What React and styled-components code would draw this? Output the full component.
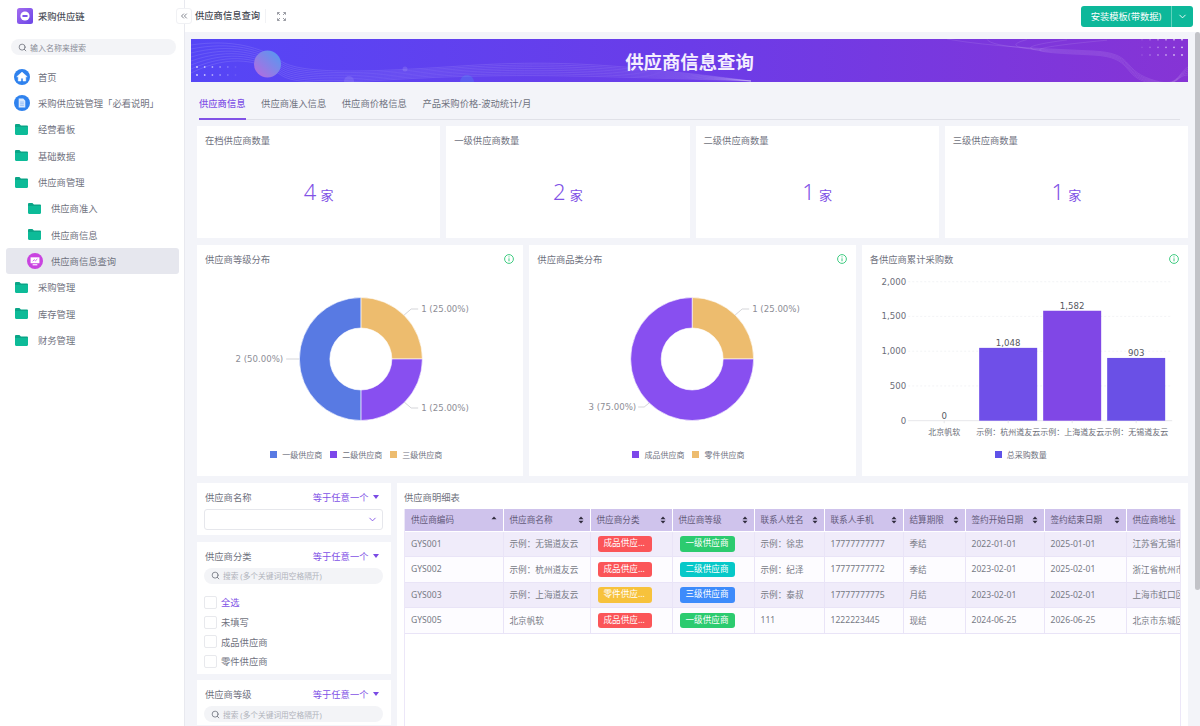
import React from 'react';
import styled, { createGlobalStyle } from 'styled-components';
import { Search, ChevronDown, ChevronsLeft } from 'lucide-react';

const cjk = '"Noto Sans", "Noto Sans CJK SC", sans-serif';
const purple = '#8152e6';
const textColor = '#6f7280';

const GlobalStyle = createGlobalStyle`
    html, body, #root {
        margin: 0;
        height: 100%;
    }
    body {
        font-family: ${cjk};
        font-size: 9.3px;
        color: ${textColor};
        overflow: hidden;
        background: #f3f4f9;
    }
    * { box-sizing: border-box; }
`;

const Shell = styled.div`
    display: grid;
    grid-template-columns: 185px 1fr;
    height: 100vh;
`;

const Sidebar = styled.aside`
    background: #fff;
    border-right: 1px solid #e8e9ef;
    display: flex;
    flex-direction: column;
`;

const Brand = styled.div`
    display: flex;
    align-items: center;
    gap: 5px;
    height: 32px;
    padding-left: 17px;
    font-size: 9.3px;
    font-weight: 500;
    color: #4c4f5a;
`;

const SearchBox = styled.div`
    display: flex;
    align-items: center;
    gap: 3px;
    height: 16px;
    margin: ${p => p.$inCard ? '0' : '7px 8px 0 11px'};
    padding-left: 7px;
    border-radius: 8px;
    background: #f3f4f7;
    color: ${p => p.$inCard ? '#b0b3bb' : '#8a8d97'};
    font-size: ${p => p.$inCard ? '7.7px' : '8px'};
    svg { color: #666a74; flex: none; }
`;

const Menu = styled.nav`
    display: flex;
    flex-direction: column;
    margin-top: 8.5px;
    padding: 0 5.5px;
`;

const MenuItem = styled.div`
    display: flex;
    align-items: center;
    height: 26.35px;
    padding-left: ${p => p.$child ? '20px' : '7px'};
    border-radius: 3px;
    background: ${p => p.$active ? '#e6e7ee' : 'transparent'};
`;

const MenuIcon = styled.span`
    display: flex;
    justify-content: center;
    width: 18px;
    margin-right: 7.5px;
    flex: none;
`;

const Main = styled.main`
    position: relative;
    display: flex;
    flex-direction: column;
    min-width: 0;
    height: 100vh;
`;

const TopBar = styled.header`
    display: flex;
    align-items: center;
    height: 32px;
    flex: none;
    padding: 0 7px 0 10px;
    background: #fff;
`;

const PageTitle = styled.div`
    font-weight: 500;
    color: #454852;
    padding-right: 5px;
    border-right: 1px solid #f1f2f5;
    line-height: 14px;
`;

const ExpandBtn = styled.span`
    display: flex;
    margin-left: 11px;
    color: #7d808a;
`;

const CollapseBtn = styled.button`
    position: absolute;
    top: 8px;
    left: -9px;
    width: 16px;
    height: 16px;
    padding: 0;
    display: flex;
    align-items: center;
    justify-content: center;
    background: #fff;
    border: 1px solid #f0f1f4;
    border-radius: 3px;
    color: #6a6d78;
`;

const InstallGroup = styled.div`
    display: flex;
    margin-left: auto;
    height: 21px;
    border-radius: 3px;
    overflow: hidden;
    background: #0db89a;
    color: #fff;
`;

const InstallBtn = styled.div`
    display: flex;
    align-items: center;
    justify-content: center;
    width: 91px;
    border-right: 1px solid #5fd3bd;
`;

const InstallArrow = styled.div`
    display: flex;
    align-items: center;
    justify-content: center;
    width: 21px;
`;

const Scroller = styled.div`
    flex: 1;
    min-height: 0;
    overflow: hidden;
    padding: 7px 12px 7px 6px;
`;

const ScrollThumb = styled.div`
    position: absolute;
    top: 32px;
    right: 0;
    width: 5px;
    height: 558px;
    border-radius: 3px;
    background: #c2c3c8;
`;

const Banner = styled.div`
    position: relative;
    height: 43px;
    display: flex;
    align-items: center;
    justify-content: center;
    background: linear-gradient(90deg, #5546f6 0%, #6b3ce8 50%, #8634d5 100%);
    color: #f4eefe;
    font-size: 18.4px;
    font-weight: 700;
    overflow: hidden;
    svg {
        position: absolute;
        inset: 0;
        width: 100%;
        height: 100%;
    }
    span { position: relative; }
`;

const Panel = styled.section`
    margin-top: 6px;
    padding-left: 6px;
`;

const Tabs = styled.div`
    display: flex;
    gap: 15.6px;
    height: 32px;
    margin: 0 8px 6px 2px;
    border-bottom: 1px solid #e0e1e8;
`;

const Tab = styled.div`
    display: flex;
    align-items: center;
    height: 32px;
    color: ${p => p.$active ? purple : textColor};
    font-weight: ${p => p.$active ? 500 : 400};
    border-bottom: 2px solid ${p => p.$active ? purple : 'transparent'};
`;

const StatGrid = styled.div`
    display: grid;
    grid-template-columns: repeat(4, minmax(0, 1fr));
    gap: 6px;
`;

const Card = styled.div`
    background: #fff;
    min-width: 0;
`;

const StatCard = styled(Card)`
    height: 112px;
    padding: 7px 8px;
    display: flex;
    flex-direction: column;
`;

const StatValue = styled.div`
    flex: 1;
    display: flex;
    align-items: baseline;
    justify-content: center;
    gap: 4px;
    padding-top: 29px;
    color: ${purple};
    font-size: 13px;
    b {
        font-size: 22px;
        font-weight: 300;
    }
`;

const ChartGrid = styled.div`
    display: grid;
    grid-template-columns: repeat(3, minmax(0, 1fr));
    gap: 6px;
    margin-top: 7px;
`;

const ChartCard = styled(Card)`
    height: 231px;
    padding-top: 7px;
    display: flex;
    flex-direction: column;
    svg.plot {
        display: block;
        width: 100%;
        height: 176px;
        margin-top: 4px;
    }
    svg.plot text {
        font-family: "DejaVu Sans", sans-serif;
        font-size: 8.6px;
    }
    svg.plot text.cat {
        font-family: ${cjk};
        font-size: 8px;
    }
`;

const ChartHead = styled.div`
    display: flex;
    align-items: center;
    justify-content: space-between;
    height: 14px;
    padding: 0 9px 0 8px;
`;

const Legend = styled.div`
    display: flex;
    justify-content: center;
    align-items: center;
    gap: 8px;
    height: 12px;
    margin-top: 2px;
    padding-right: 8px;
    font-size: 8px;
`;

const LegendItem = styled.span`
    display: flex;
    align-items: center;
    gap: 5px;
    &::before {
        content: "";
        width: 7px;
        height: 7px;
        background: ${p => p.$color};
    }
`;

const BottomRow = styled.div`
    display: grid;
    grid-template-columns: 194px minmax(0, 1fr);
    gap: 6px;
    margin-top: 7px;
    min-height: 405px;
`;

const FilterColumn = styled.div`
    display: flex;
    flex-direction: column;
    gap: 6.5px;
`;

const FilterCard = styled(Card)`
    padding: 7px 8px ${p => p.$list ? '2.5px' : '5px'} 7px;
`;

const FilterHead = styled.div`
    display: flex;
    justify-content: space-between;
    align-items: center;
    height: 14px;
    margin-bottom: 5px;
    padding-left: 1px;
`;

const MatchMode = styled.span`
    display: flex;
    align-items: center;
    gap: 4.5px;
    padding-right: 4px;
    color: ${purple};
    &::after {
        content: "";
        border-left: 3.5px solid transparent;
        border-right: 3.5px solid transparent;
        border-top: 4.5px solid #7a4ae4;
    }
`;

const SelectBox = styled.div`
    display: flex;
    align-items: center;
    justify-content: flex-end;
    height: 21px;
    padding-right: 4px;
    border: 1px solid #e6e7ec;
    border-radius: 3px;
    color: ${purple};
`;

const OptionList = styled.div`
    display: flex;
    flex-direction: column;
    margin-top: 9px;
`;

const Option = styled.label`
    display: flex;
    align-items: center;
    gap: 4px;
    height: 19.7px;
    color: ${p => p.$accent ? purple : textColor};
    &::before {
        content: "";
        width: 11px;
        height: 11px;
        border: 1px solid #e8e9ed;
        border-radius: 2px;
    }
`;

const TableCard = styled(Card)`
    padding: 7px;
    display: flex;
    flex-direction: column;
`;

const TableTitle = styled.div`
    height: 14px;
    margin-bottom: 5px;
`;

const TableFrame = styled.div`
    flex: 1;
    overflow: hidden;
    border-left: 1px solid #ece7f8;
    border-right: 1px solid #ece7f8;
`;

const Table = styled.table`
    table-layout: fixed;
    width: 835px;
    border-collapse: collapse;
    font-size: 8.6px;
`;

const Th = styled.th`
    height: 22px;
    padding: 0 6px;
    background: #cfc3ec;
    color: #635a7a;
    font-weight: 400;
    text-align: left;
    border-right: 1.5px solid #fff;
    border-bottom: 1.5px solid #fff;
    white-space: nowrap;
    overflow: hidden;
`;

const ThInner = styled.div`
    display: flex;
    align-items: center;
    justify-content: space-between;
`;

const Td = styled.td`
    height: 25.5px;
    padding: 0 6px;
    background: ${p => p.$odd ? '#f0ecfa' : '#fdfcff'};
    border-right: 1px solid #e9e4f7;
    border-bottom: 1px solid #e9e4f7;
    color: #777a85;
    white-space: nowrap;
    overflow: hidden;
`;

const Tag = styled.span`
    display: block;
    width: ${p => p.$clip ? '54px' : '55.5px'};
    height: 15.5px;
    line-height: 15.5px;
    padding: 0 6px;
    margin-left: 1px;
    border-radius: 3px;
    background: ${p => p.$bg};
    color: #fff;
    white-space: nowrap;
    overflow: hidden;
    text-overflow: ellipsis;
`;

const teal = '#0dbb98';

const Folder = () => (
    <svg width="13" height="11" viewBox="0 0 13 11">
        <path d="M0 1.2C0 .5.5 0 1.2 0h3.2l1.5 1.6h6C12.5 1.6 13 2 13 2.700V3H0z" fill="#0aa587" />
        <path d="M0 3h13v6.800c0 .7-.5 1.200-1.200 1.200H1.200C.5 11 0 10.500 0 9.800z" fill={teal} />
    </svg>
);

const HomeIcon = () => (
    <svg width="16" height="16" viewBox="0 0 17 17">
        <circle cx="8.500" cy="8.500" r="8.500" fill="#2f82ee" />
        <path d="M8.500 3.300 2.900 8.300h1.600v4.500h2.900V9.800h2.200v3h2.900V8.300h1.600z" fill="#fff" strokeLinejoin="round" stroke="#fff" strokeWidth=".5" />
    </svg>
);

const DocIcon = () => (
    <svg width="16" height="16" viewBox="0 0 17 17">
        <circle cx="8.500" cy="8.500" r="8.500" fill="#2f82ee" />
        <path d="M5 3.800h4.800L12 6v7.200H5z" fill="#dbe9fd" />
        <path d="M6.500 7.500h4M6.500 9.300h4M6.500 11h4" stroke="#7fb2f5" strokeWidth=".8" />
    </svg>
);

const ScreenIcon = () => (
    <svg width="16" height="16" viewBox="0 0 17 17">
        <circle cx="8.500" cy="8.500" r="8.500" fill="#c944e0" />
        <path d="M3.800 4.600h9.400v6.300H3.800z" fill="#fff" />
        <path d="M6 12.500h5" stroke="#fff" strokeWidth="1.200" />
        <path d="M6 8.700l1.700-1.500 1.400 1 1.900-1.800" stroke="#c944e0" strokeWidth=".9" fill="none" />
    </svg>
);

const Logo = () => (
    <svg width="16" height="16" viewBox="0 0 16 16">
        <defs>
            <linearGradient id="logoFill" x1="0" y1="0" x2="1" y2="1">
                <stop offset="0" stopColor="#a46cf0" />
                <stop offset="1" stopColor="#6a45e6" />
            </linearGradient>
        </defs>
        <rect width="16" height="16" rx="2.500" fill="url(#logoFill)" />
        <circle cx="8" cy="8" r="4.600" fill="#fff" />
        <rect x="5.200" y="6.900" width="5.600" height="2.200" rx="1.100" fill="#7b52ea" />
    </svg>
);

const ExpandIcon = () => (
    <svg width="9" height="9" viewBox="0 0 10 10" fill="none" stroke="currentColor" strokeWidth=".9">
        <path d="M.5 3V.5H3M7 .5h2.500V3M9.500 7v2.500H7M3 9.500H.5V7" />
        <path d="M1 1l2.300 2.300M9 1 6.700 3.300M9 9 6.700 6.700M1 9l2.300-2.300" />
    </svg>
);

const InfoIcon = () => (
    <svg width="10" height="10" viewBox="0 0 10 10" fill="none" stroke="#3fcb80" strokeWidth="1">
        <circle cx="5" cy="5" r="4.400" />
        <path d="M5 4.300v3M5 2.400v1" />
    </svg>
);

const SortIcon = ({ up }) => (
    <svg width="6" height="8" viewBox="0 0 6 8" fill="#2e2a3c">
        <path d="M3 .5 5.500 3.300H.5z" />
        {!up && <path d="M3 7.500.5 4.700h5z" />}
    </svg>
);

const BannerArt = () => {
    const left = [0, 1, 2, 3, 4, 5, 6, 7];
    const right = [0, 1, 2, 3, 4];
    return (
        <svg viewBox="0 0 997 43" preserveAspectRatio="none" fill="none">
            <defs>
                <linearGradient id="planet" x1="1" y1="0" x2="0" y2="1">
                    <stop offset="0" stopColor="#4f9cf2" />
                    <stop offset="1" stopColor="#bb68de" />
                </linearGradient>
            </defs>
            {left.map(i => (
                <path key={i} stroke="#fff" strokeOpacity=".22" strokeWidth=".5"
                    d={`M0 ${6 + i * 4} C40 ${i * 2} 70 ${8 + i * 2} 90 ${22 + i * 2} S180 ${33 + i} 270 ${27 + i * 1.5} S420 ${24 + i * 2} 560 42`} />
            ))}
            <circle cx="76.500" cy="25" r="13.500" fill="url(#planet)" />
            <circle cx="158" cy="42" r="5" fill="#fff" fillOpacity=".1" />
            <circle cx="214" cy="30" r="2.500" fill="#fff" fillOpacity=".12" />
            <circle cx="276" cy="43" r="7" fill="#4f9cf2" fillOpacity=".3" />
            {[28, 36].map(y => [0, 1, 2, 3, 4, 5].map(i => (
                <circle key={`l${y}${i}`} cx={6 + i * 7.700} cy={y} r=".9" fill="#fff" fillOpacity={0.8 - i * 0.14} />
            )))}
            {right.map(i => (
                <path key={i} stroke="#fff" strokeOpacity=".2" strokeWidth=".5"
                    d={`M${756 + i * 40} ${i * 0.3} C800 ${8 + i} 860 ${10 + i} 902 ${12 + i} S930 ${30 + i * 2} 959 ${40 + i} S985 36 997 ${28 + i * 2}`} />
            ))}
            {[0.7, 8.300, 16].map(y => [0, 1, 2, 3, 4, 5].map(i => (
                <circle key={`r${y}${i}`} cx={951 + i * 8} cy={y} r=".9" fill="#fff" fillOpacity={0.12 + i * 0.13} />
            )))}
        </svg>
    );
};

// donut slice between two angles, 0 = top, clockwise
const slice = (cx, cy, from, to) => {
    const R = 61.5;
    const r = 31;
    const pt = (rad, a) => {
        const t = (a - 90) * Math.PI / 180;
        return `${cx + rad * Math.cos(t)} ${cy + rad * Math.sin(t)}`;
    };
    const large = to - from > 180 ? 1 : 0;
    return `M${pt(R, from)} A${R} ${R} 0 ${large} 1 ${pt(R, to)} L${pt(r, to)} A${r} ${r} 0 ${large} 0 ${pt(r, from)} Z`;
};

const Donut = ({ cx, slices, labels }) => (
    <svg className="plot" viewBox="0 0 326 176">
        {slices.map(s => (
            <path key={s.from} d={slice(cx, 89, s.from, s.to)} fill={s.color} stroke="#fff" strokeWidth=".6" />
        ))}
        {labels.map(l => (
            <g key={l.text + l.y}>
                <path d={l.line} fill="none" stroke="#c9cacf" strokeWidth=".8" />
                <text x={l.x} y={l.y} textAnchor={l.anchor} dominantBaseline="central" fill="#8d8e96">{l.text}</text>
            </g>
        ))}
    </svg>
);

const bars = [
    { name: '北京帆软', value: 0, x: 53, color: '#6f4fe8' },
    { name: '示例：杭州道友云', value: 1048, x: 117, color: '#6f4fe8' },
    { name: '示例：上海道友云', value: 1582, x: 181, color: '#8047e6' },
    { name: '示例：无锡道友云', value: 903, x: 245, color: '#6a50e6' },
];

const BarChart = () => {
    const base = 150.7;
    const scale = 139 / 2000;
    return (
        <svg className="plot" viewBox="0 0 326 176">
            {[0, 500, 1000, 1500, 2000].map(v => (
                <g key={v}>
                    {v > 0 && <path d={`M46 ${base - v * scale}H310`} stroke="#eeeff2" strokeWidth=".7" strokeDasharray="2 2" />}
                    <text x="44" y={base - v * scale} textAnchor="end" dominantBaseline="central" fill="#6c6e78">{v.toLocaleString('en-US')}</text>
                </g>
            ))}
            <path d={`M46 ${base}H310`} stroke="#dfe0e5" strokeWidth=".8" />
            {bars.map(b => (
                <g key={b.name}>
                    <rect x={b.x} y={base - b.value * scale} width="58" height={b.value * scale} fill={b.color} />
                    <path d={`M${b.x + 29} ${base}v2.500`} stroke="#dfe0e5" strokeWidth=".8" />
                    <text x={b.x + 29} y={base - b.value * scale - 4.800} textAnchor="middle" dominantBaseline="central" fill="#55575f">{b.value.toLocaleString('en-US')}</text>
                    <text className="cat" x={b.x + 29} y="161" textAnchor="middle" dominantBaseline="central" fill="#6c6e78">{b.name}</text>
                </g>
            ))}
        </svg>
    );
};

const menu = [
    { label: '首页', icon: <HomeIcon /> },
    { label: '采购供应链管理「必看说明」', icon: <DocIcon /> },
    { label: '经营看板', icon: <Folder /> },
    { label: '基础数据', icon: <Folder /> },
    { label: '供应商管理', icon: <Folder /> },
    { label: '供应商准入', icon: <Folder />, child: true },
    { label: '供应商信息', icon: <Folder />, child: true },
    { label: '供应商信息查询', icon: <ScreenIcon />, child: true, active: true },
    { label: '采购管理', icon: <Folder /> },
    { label: '库存管理', icon: <Folder /> },
    { label: '财务管理', icon: <Folder /> },
];

const stats = [
    { title: '在档供应商数量', value: 4 },
    { title: '一级供应商数量', value: 2 },
    { title: '二级供应商数量', value: 1 },
    { title: '三级供应商数量', value: 1 },
];

const columns = [
    ['供应商编码', 98], ['供应商名称', 87], ['供应商分类', 82], ['供应商等级', 82], ['联系人姓名', 70],
    ['联系人手机', 79], ['结算期限', 62], ['签约开始日期', 79], ['签约结束日期', 82], ['供应商地址', 114],
];

const red = '#fb5558';
const rows = [
    ['GYS001', '示例：无锡道友云', ['成品供应商', red], ['一级供应商', '#2ccb6f'], '示例：徐忠', '17777777777', '季结', '2022-01-01', '2025-01-01', '江苏省无锡市新吴区'],
    ['GYS002', '示例：杭州道友云', ['成品供应商', red], ['二级供应商', '#06c8c8'], '示例：纪泽', '17777777772', '季结', '2023-02-01', '2025-02-01', '浙江省杭州市西湖区'],
    ['GYS003', '示例：上海道友云', ['零件供应商', '#f7c23c'], ['三级供应商', '#3d8bfb'], '示例：泰叔', '17777777775', '月结', '2023-02-01', '2025-02-01', '上海市虹口区四川路'],
    ['GYS005', '北京帆软', ['成品供应商', red], ['一级供应商', '#2ccb6f'], '111', '1222223445', '现结', '2024-06-25', '2026-06-25', '北京市东城区东四街'],
];

const FilterTitle = ({ title }) => (
    <FilterHead>
        <span>{title}</span>
        <MatchMode>等于任意一个</MatchMode>
    </FilterHead>
);

const FilterSearch = () => (
    <SearchBox $inCard>
        <Search size={9} />
        搜索 (多个关键词用空格隔开)
    </SearchBox>
);

const App = () => {
    return (
        <Shell>
            <GlobalStyle />
            <Sidebar>
                <Brand><Logo />采购供应链</Brand>
                <SearchBox><Search size={9} />输入名称来搜索</SearchBox>
                <Menu>
                    {menu.map(m => (
                        <MenuItem key={m.label} $child={m.child} $active={m.active}>
                            <MenuIcon>{m.icon}</MenuIcon>
                            {m.label}
                        </MenuItem>
                    ))}
                </Menu>
            </Sidebar>
            <Main>
                <CollapseBtn><ChevronsLeft size={10} /></CollapseBtn>
                <TopBar>
                    <PageTitle>供应商信息查询</PageTitle>
                    <ExpandBtn><ExpandIcon /></ExpandBtn>
                    <InstallGroup>
                        <InstallBtn>安装模板(带数据)</InstallBtn>
                        <InstallArrow><ChevronDown size={11} /></InstallArrow>
                    </InstallGroup>
                </TopBar>
                <Scroller>
                    <Banner><BannerArt /><span>供应商信息查询</span></Banner>
                    <Panel>
                        <Tabs>
                            <Tab $active>供应商信息</Tab>
                            <Tab>供应商准入信息</Tab>
                            <Tab>供应商价格信息</Tab>
                            <Tab>产品采购价格-波动统计/月</Tab>
                        </Tabs>
                        <StatGrid>
                            {stats.map(s => (
                                <StatCard key={s.title}>
                                    {s.title}
                                    <StatValue><b>{s.value}</b>家</StatValue>
                                </StatCard>
                            ))}
                        </StatGrid>
                        <ChartGrid>
                            <ChartCard>
                                <ChartHead>供应商等级分布<InfoIcon /></ChartHead>
                                <Donut
                                    cx={163.7}
                                    slices={[
                                        { from: 0, to: 90, color: '#edbc6e' },
                                        { from: 90, to: 180, color: '#884ff0' },
                                        { from: 180, to: 360, color: '#587ae3' },
                                    ]}
                                    labels={[
                                        { text: '1 (25.00%)', x: 224, y: 39, anchor: 'start', line: 'M207 45 L214 39 H221' },
                                        { text: '1 (25.00%)', x: 224, y: 138, anchor: 'start', line: 'M207 132 L214 138 H221' },
                                        { text: '2 (50.00%)', x: 86, y: 89, anchor: 'end', line: 'M89 89 H102' },
                                    ]}
                                />
                                <Legend>
                                    <LegendItem $color="#587ae3">一级供应商</LegendItem>
                                    <LegendItem $color="#7c47ea">二级供应商</LegendItem>
                                    <LegendItem $color="#edbc6e">三级供应商</LegendItem>
                                </Legend>
                            </ChartCard>
                            <ChartCard>
                                <ChartHead>供应商品类分布<InfoIcon /></ChartHead>
                                <Donut
                                    cx={163}
                                    slices={[
                                        { from: 0, to: 90, color: '#edbc6e' },
                                        { from: 90, to: 360, color: '#884ff0' },
                                    ]}
                                    labels={[
                                        { text: '1 (25.00%)', x: 223, y: 39, anchor: 'start', line: 'M206 45 L213 39 H220' },
                                        { text: '3 (75.00%)', x: 107, y: 137, anchor: 'end', line: 'M120 133 L115 137 H109' },
                                    ]}
                                />
                                <Legend>
                                    <LegendItem $color="#7c47ea">成品供应商</LegendItem>
                                    <LegendItem $color="#edbc6e">零件供应商</LegendItem>
                                </Legend>
                            </ChartCard>
                            <ChartCard>
                                <ChartHead>各供应商累计采购数<InfoIcon /></ChartHead>
                                <BarChart />
                                <Legend>
                                    <LegendItem $color="#5f52e8">总采购数量</LegendItem>
                                </Legend>
                            </ChartCard>
                        </ChartGrid>
                        <BottomRow>
                            <FilterColumn>
                                <FilterCard>
                                    <FilterTitle title="供应商名称" />
                                    <SelectBox><ChevronDown size={11} /></SelectBox>
                                </FilterCard>
                                <FilterCard $list>
                                    <FilterTitle title="供应商分类" />
                                    <FilterSearch />
                                    <OptionList>
                                        <Option $accent>全选</Option>
                                        <Option>未填写</Option>
                                        <Option>成品供应商</Option>
                                        <Option>零件供应商</Option>
                                    </OptionList>
                                </FilterCard>
                                <FilterCard $list>
                                    <FilterTitle title="供应商等级" />
                                    <FilterSearch />
                                </FilterCard>
                            </FilterColumn>
                            <TableCard>
                                <TableTitle>供应商明细表</TableTitle>
                                <TableFrame>
                                    <Table>
                                        <colgroup>
                                            {columns.map(c => <col key={c[0]} width={c[1]} />)}
                                        </colgroup>
                                        <thead>
                                            <tr>
                                                {columns.map((c, i) => (
                                                    <Th key={c[0]}>
                                                        <ThInner>{c[0]}<SortIcon up={i === 0} /></ThInner>
                                                    </Th>
                                                ))}
                                            </tr>
                                        </thead>
                                        <tbody>
                                            {rows.map((r, i) => (
                                                <tr key={r[0]}>
                                                    {r.map((cell, j) => (
                                                        <Td key={j} $odd={i % 2 === 0}>
                                                            {Array.isArray(cell)
                                                                ? <Tag $bg={cell[1]} $clip={j === 2}>{cell[0]}</Tag>
                                                                : cell}
                                                        </Td>
                                                    ))}
                                                </tr>
                                            ))}
                                        </tbody>
                                    </Table>
                                </TableFrame>
                            </TableCard>
                        </BottomRow>
                    </Panel>
                </Scroller>
                <ScrollThumb />
            </Main>
        </Shell>
    );
};

export default App;
